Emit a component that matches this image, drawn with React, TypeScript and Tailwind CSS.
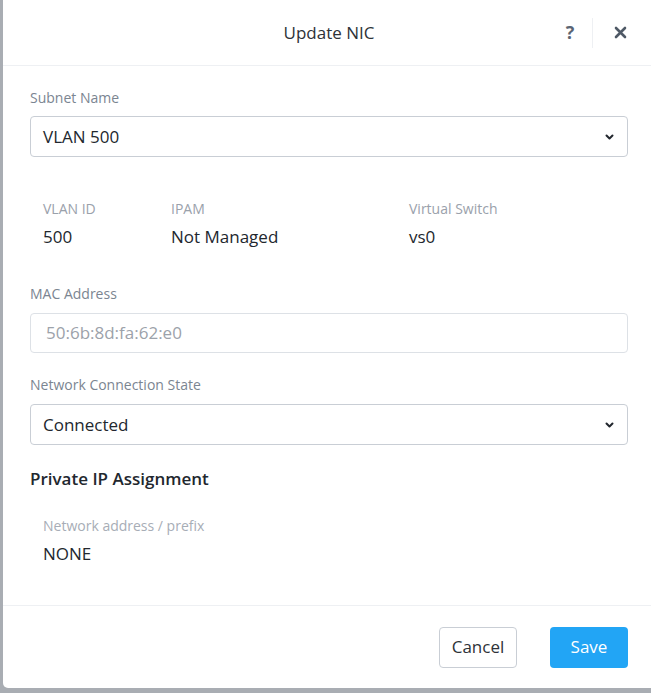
import React from 'react';

const font = { fontFamily: '"Open Sans", "Liberation Sans", sans-serif' };

const Chevron: React.FC = () => (
  <svg width="9" height="6" viewBox="0 0 9 6" className="text-[#22272e]">
    <polyline
      points="1.5,1.5 4.5,4.5 7.5,1.5"
      fill="none"
      stroke="currentColor"
      strokeWidth="2"
      strokeLinecap="round"
      strokeLinejoin="round"
    />
  </svg>
);

const FieldLabel: React.FC<{ children: React.ReactNode; className?: string }> = ({
  children,
  className = '',
}) => (
  <div className={`h-[18px] text-[14px] leading-[18px] text-[#7b8591] ${className}`}>
    {children}
  </div>
);

const SelectBox: React.FC<{ value: string; className?: string }> = ({ value, className = '' }) => (
  <div
    className={`flex h-[41px] items-center justify-between rounded-[4px] border border-[#c9ced5] pl-[12px] pr-[13px] text-[17px] text-[#22272e] ${className}`}
  >
    <span>{value}</span>
    <Chevron />
  </div>
);

const InfoItem: React.FC<{ label: string; value: string; width?: string }> = ({
  label,
  value,
  width = '',
}) => (
  <div className={width}>
    <div className="h-[18px] text-[14px] leading-[18px] text-[#9aa1ab]">{label}</div>
    <div className="mt-[8px] h-[22px] text-[17px] leading-[22px] text-[#22272e]">{value}</div>
  </div>
);

export default function App() {
  return (
    <div className="h-[693px] w-[651px] overflow-hidden bg-[#a9adb3]" style={font}>
      <div className="ml-[3px] flex h-[688px] w-[652px] flex-col rounded-bl-[5px] bg-white">
        {/* header */}
        <div className="relative flex h-[66px] items-center justify-center border-b border-[#eef0f3]">
          <span className="text-[17px] text-[#2e3238]">Update NIC</span>
          <div className="absolute right-[28px] top-0 flex h-full items-center">
            <span className="w-[24px] text-center text-[18px] font-bold text-[#5b6573]">?</span>
            <div className="ml-[10px] h-[30px] w-px bg-[#eef0f3]" />
            <div className="ml-[20px] flex w-[14px] justify-center">
              <svg width="13" height="13" viewBox="0 0 13 13">
                <path
                  d="M2 2 L11 11 M11 2 L2 11"
                  stroke="#4f5966"
                  strokeWidth="2.6"
                  strokeLinecap="round"
                />
              </svg>
            </div>
          </div>
        </div>

        {/* body */}
        <div className="h-[540px] border-b border-[#eef0f3] px-[27px]">
          <FieldLabel className="mt-[23px]">Subnet Name</FieldLabel>
          <SelectBox value="VLAN 500" className="mt-[9px]" />

          <div className="mt-[43px] flex pl-[13px]">
            <InfoItem label="VLAN ID" value="500" width="w-[128px]" />
            <InfoItem label="IPAM" value="Not Managed" width="w-[238px]" />
            <InfoItem label="Virtual Switch" value="vs0" />
          </div>

          <FieldLabel className="mt-[37px]">MAC Address</FieldLabel>
          <div className="mt-[10px] flex h-[40px] items-center rounded-[4px] border border-[#dde1e6] pl-[15px] text-[17px] text-[#9ca2aa]">
            50:6b:8d:fa:62:e0
          </div>

          <FieldLabel className="mt-[23px]">Network Connection State</FieldLabel>
          <SelectBox value="Connected" className="mt-[10px]" />

          <div className="mt-[23px] h-[22px] text-[17px] font-semibold leading-[22px] text-[#22272e]">
            Private IP Assignment
          </div>

          <div className="mt-[27px] pl-[13px]">
            <div className="h-[18px] text-[14px] leading-[18px] text-[#a7adb6]">
              Network address / prefix
            </div>
            <div className="mt-[8px] h-[22px] text-[17px] leading-[22px] text-[#22272e]">NONE</div>
          </div>
        </div>

        {/* footer */}
        <div className="flex flex-1 items-center justify-end gap-[33px] pr-[27px]">
          <button className="h-[41px] w-[78px] rounded-[4px] border border-[#c9ced5] bg-white text-[17px] text-[#2e3238]">
            Cancel
          </button>
          <button className="h-[41px] w-[78px] rounded-[4px] bg-[#22a5f5] text-[17px] text-white">
            Save
          </button>
        </div>
      </div>
    </div>
  );
}
